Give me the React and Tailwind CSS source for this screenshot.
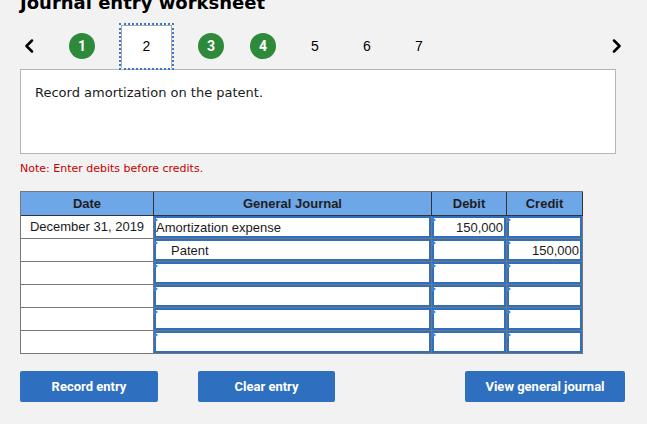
import React from "react";

const rows = [
  { date: "December 31, 2019", acct: "Amortization expense", indent: false, debit: "150,000", credit: "" },
  { date: "", acct: "Patent", indent: true, debit: "", credit: "150,000" },
  { date: "", acct: "", indent: false, debit: "", credit: "" },
  { date: "", acct: "", indent: false, debit: "", credit: "" },
  { date: "", acct: "", indent: false, debit: "", credit: "" },
  { date: "", acct: "", indent: false, debit: "", credit: "" },
];

function Tri() {
  return (
    <span className="absolute left-[-2px] top-[-1px] w-0 h-0 border-y-[3px] border-y-transparent border-l-[4px] border-l-[#3a82dc]" />
  );
}

function InputCell({ children, align = "left", indent = false }) {
  return (
    <div
      className={
        "relative bg-white border-2 border-[#2f6fc0] text-[13px] leading-[19px] text-[#1a1a1a] whitespace-nowrap " +
        (align === "right" ? "text-right pr-px" : indent ? "pl-[15px]" : "pl-0")
      }
    >
      <Tri />
      {children}
    </div>
  );
}

function Circle({ n }) {
  return (
    <div className="w-[26px] h-[26px] rounded-full bg-[#2e8a3a] text-white text-[14px] font-bold flex items-center justify-center font-['Roboto',sans-serif]">
      {n}
    </div>
  );
}

function Num({ n }) {
  return <div className="w-[26px] text-center text-[14px] text-black">{n}</div>;
}

export default function App() {
  return (
    <div className="min-h-screen bg-[#f2f2f2] pl-[20px] overflow-hidden font-['Liberation_Sans',Arial,sans-serif]">
      <h1 className="mt-[-6px] h-[18px] text-[18px] leading-[18px] font-bold text-black font-['DejaVu_Sans',Verdana,sans-serif] whitespace-nowrap">
        Journal entry worksheet
      </h1>

      <div className="mt-[16px] flex items-center h-[36px] w-[602px]">
        <div className="w-[49px] flex items-center">
          <svg width="10" height="14" viewBox="0 0 10 14" className="ml-[4px]">
            <polyline points="8,1.5 2.5,7 8,12.5" fill="none" stroke="#000" strokeWidth="2.5" strokeLinecap="round" strokeLinejoin="round" />
          </svg>
        </div>
        <div className="flex items-center gap-[26px]">
          <Circle n="1" />
          <div className="self-start relative z-10 w-[51px] h-[43px] bg-white border border-b-0 border-[#aaa] outline-2 outline-dotted outline-[#3a78c8] outline-offset-0 text-center pt-[12px] text-[14px] leading-[16px] text-black">
            2
          </div>
          <Circle n="3" />
          <Circle n="4" />
          <Num n="5" />
          <Num n="6" />
          <Num n="7" />
        </div>
        <div className="ml-auto">
          <svg width="10" height="14" viewBox="0 0 10 14">
            <polyline points="2,1.5 7.5,7 2,12.5" fill="none" stroke="#000" strokeWidth="2.5" strokeLinecap="round" strokeLinejoin="round" />
          </svg>
        </div>
      </div>

      <div className="mt-[5px] w-[596px] h-[85px] bg-white border border-[#b5b5b5] pl-[14px] pt-[15px] text-[13px] leading-[16px] text-[#1a1a1a] font-['DejaVu_Sans',Verdana,sans-serif]">
        Record amortization on the patent.
      </div>

      <div className="mt-[8px] text-[11px] leading-[14px] text-[#c80000] font-['DejaVu_Sans',Verdana,sans-serif]">
        Note: Enter debits before credits.
      </div>

      <div className="mt-[15px] w-[563px]">
        <div className="flex border-t border-l border-[#777] bg-[#6ea7e8] text-[13px] font-bold text-[#1e1e1e]">
          <div className="w-[133px] h-[24px] border-r border-b border-[#333] flex items-center justify-center">Date</div>
          <div className="w-[278px] h-[24px] border-r border-b border-[#333] flex items-center justify-center">General Journal</div>
          <div className="w-[75px] h-[24px] border-r border-b border-[#333] flex items-center justify-center">Debit</div>
          <div className="w-[76px] h-[24px] border-r border-b border-[#333] flex items-center justify-center">Credit</div>
        </div>
        <div className="grid grid-cols-[132px_277px_74px_75px] auto-rows-[22px] gap-px bg-[#777] px-px pb-px">
          {rows.map((r, i) => (
            <React.Fragment key={i}>
              <div className="bg-white flex items-center justify-center text-[13px] text-[#1a1a1a] whitespace-nowrap">{r.date}</div>
              <InputCell indent={r.indent}>{r.acct}</InputCell>
              <InputCell align="right">{r.debit}</InputCell>
              <InputCell align="right">{r.credit}</InputCell>
            </React.Fragment>
          ))}
        </div>
      </div>

      <div className="mt-[17px] flex w-[605px] font-['Roboto',sans-serif]">
        <button className="w-[138px] h-[31px] rounded-[2px] bg-[#2e6fc0] text-white text-[13px] font-bold">Record entry</button>
        <button className="ml-[40px] w-[137px] h-[31px] rounded-[2px] bg-[#2e6fc0] text-white text-[13px] font-bold">Clear entry</button>
        <button className="ml-auto w-[160px] h-[31px] rounded-[2px] bg-[#2e6fc0] text-white text-[13px] font-bold">View general journal</button>
      </div>
    </div>
  );
}
